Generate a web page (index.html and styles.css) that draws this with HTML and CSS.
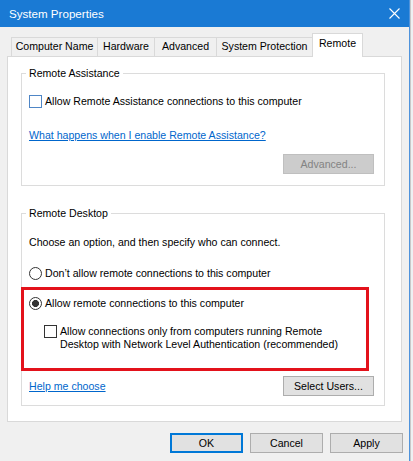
FILE: index.html
```html
<!DOCTYPE html>
<html>
<head>
<meta charset="utf-8">
<link rel="stylesheet" href="styles.css">
</head>
<body>
<div class="screen">
  <div class="window">
    <div class="titlebar">
      <span class="title">System Properties</span>
      <svg class="close" width="11" height="11" viewBox="0 0 11 11"><path d="M0.5 0.5 L10.5 10.5 M10.5 0.5 L0.5 10.5" stroke="#fff" stroke-width="1.1" fill="none"/></svg>
    </div>
    <div class="body">
      <div class="tabs">
        <div class="tab tab-cn">Computer Name</div>
        <div class="tab tab-hw">Hardware</div>
        <div class="tab tab-adv">Advanced</div>
        <div class="tab tab-sp">System Protection</div>
        <div class="tab tab-remote selected">Remote</div>
      </div>
      <div class="panel">
        <fieldset class="group g1">
          <legend>Remote Assistance</legend>
          <div class="row check-row"><span class="checkbox focus"></span><span>Allow Remote Assistance connections to this computer</span></div>
          <div class="row link-row"><a class="link">What happens when I enable Remote Assistance?</a></div>
          <div class="row btn-row"><button class="btn disabled">Advanced...</button></div>
        </fieldset>
        <fieldset class="group g2">
          <legend>Remote Desktop</legend>
          <div class="row intro">Choose an option, and then specify who can connect.</div>
          <div class="row radio-row first-radio"><span class="radio"></span><span>Don’t allow remote connections to this computer</span></div>
          <div class="highlight">
            <div class="radio-row"><span class="radio checked"></span><span>Allow remote connections to this computer</span></div>
            <div class="nla-row"><span class="checkbox"></span><span class="nla-text">Allow connections only from computers running Remote<br>Desktop with Network Level Authentication (recommended)</span></div>
          </div>
          <div class="row help-row"><a class="link">Help me choose</a><button class="btn">Select Users...</button></div>
        </fieldset>
      </div>
      <div class="actions">
        <button class="btn default">OK</button>
        <button class="btn">Cancel</button>
        <button class="btn">Apply</button>
      </div>
    </div>
  </div>
  <div class="desk"></div>
</div>
</body>
</html>
```
FILE: styles.css
```css
* { box-sizing: border-box; }
html, body { margin: 0; padding: 0; }
body {
  width: 413px;
  height: 461px;
  overflow: hidden;
  background: #ececec;
  font-family: "Liberation Sans", Arial, sans-serif;
  font-size: 10.6px;
  color: #000;
}
.screen { display: flex; width: 413px; height: 461px; }
.window {
  width: 410px;
  height: 461px;
  background: #f0f0f0;
  border-right: 1px solid #4f93dc;
  display: flex;
  flex-direction: column;
}
.desk { flex: 1; background: #eef0f2; border-left: 1px solid #c9c9c9; }
.titlebar {
  height: 27px;
  background: #1a7ad4;
  color: #fff;
  display: flex;
  align-items: center;
  justify-content: space-between;
  padding: 0 9px 1px 9px;
  flex: none;
}
.title { font-size: 11.6px; }
.close { display: block; margin-top: 1px; }
.body { padding: 6px 0 0 7px; display: flex; flex-direction: column; }
.tabs {
  display: flex;
  align-items: flex-start;
  height: 24px;
  margin-left: 4px;
  margin-bottom: -1px;
  position: relative;
  z-index: 1;
}
.tab {
  margin-top: 4px;
  height: 19px;
  border: 1px solid #d9d9d9;
  border-bottom: none;
  margin-right: -1px;
  background: #f0f0f0;
  display: flex;
  align-items: center;
  justify-content: center;
  padding-bottom: 2px;
  white-space: nowrap;
}
.tab-cn { width: 87px; }
.tab-hw { width: 58px; }
.tab-adv { width: 63px; }
.tab-sp { width: 97px; }
.tab-remote { width: 51px; }
.tab.selected {
  margin-top: 0;
  height: 24px;
  background: #fff;
  padding-bottom: 5px;
}
.panel {
  width: 395px;
  height: 366px;
  background: #fff;
  border: 1px solid #d9d9d9;
  padding: 9px 16px 0 13px;
  flex: none;
}
.group {
  margin: 0;
  padding: 0;
  border: 1px solid #dcdcdc;
  width: 364px;
  min-width: 0;
}
.group legend {
  padding: 0 3px;
  margin-left: 4px;
  line-height: 14px;
  height: 14px;
}
.g2 { margin-top: 20px; }
.row { line-height: 14px; height: 14px; padding-left: 7px; }
.check-row, .radio-row, .nla-row { display: flex; align-items: center; gap: 3px; }
.check-row { margin-top: 14px; }
.link-row { margin-top: 20px; }
.btn-row {
  margin-top: 12px;
  height: 20px;
  display: flex;
  justify-content: flex-end;
  padding-right: 10px;
  margin-bottom: 11px;
}
.link { color: #0066cc; text-decoration: underline; }
.checkbox {
  width: 13px;
  height: 13px;
  border: 1px solid #333;
  background: #fff;
  flex: none;
}
.checkbox.focus { border-color: #4f86c6; }
.radio {
  width: 13px;
  height: 13px;
  border: 1px solid #333;
  border-radius: 50%;
  background: #fff;
  flex: none;
}
.radio.checked { background: radial-gradient(circle, #333 3.2px, #fff 3.8px); }
.intro { margin-top: 15px; }
.first-radio { margin-top: 17px; }
.highlight {
  margin-top: 7px;
  margin-left: -1px;
  width: 348px;
  border: 3px solid #e3121b;
  padding: 6px 0 17px 5px;
}
.highlight .radio-row { height: 14px; line-height: 14px; }
.nla-row {
  margin-top: 15px;
  padding-left: 15px;
  align-items: flex-start;
  gap: 3px;
}
.nla-text { line-height: 13px; }
.help-row {
  margin-top: 5px;
  height: 20px;
  display: flex;
  align-items: center;
  justify-content: space-between;
  padding-right: 10px;
  margin-bottom: 9px;
}
.btn {
  width: 91px;
  height: 20px;
  margin: 0;
  padding: 0 0 1px;
  border: 1px solid #adadad;
  background: #e1e1e1;
  font-family: "Liberation Sans", Arial, sans-serif;
  font-size: 10.6px;
  color: #000;
}
.btn.disabled { background: #cccccc; border-color: #bfbfbf; color: #838383; }
.actions {
  margin-top: 11px;
  display: flex;
  justify-content: flex-end;
  gap: 7px;
  padding-right: 6px;
}
.actions .btn { width: 73px; }
.btn.default { border-color: #0078d7; box-shadow: inset 0 0 0 1px #0078d7; }
```
